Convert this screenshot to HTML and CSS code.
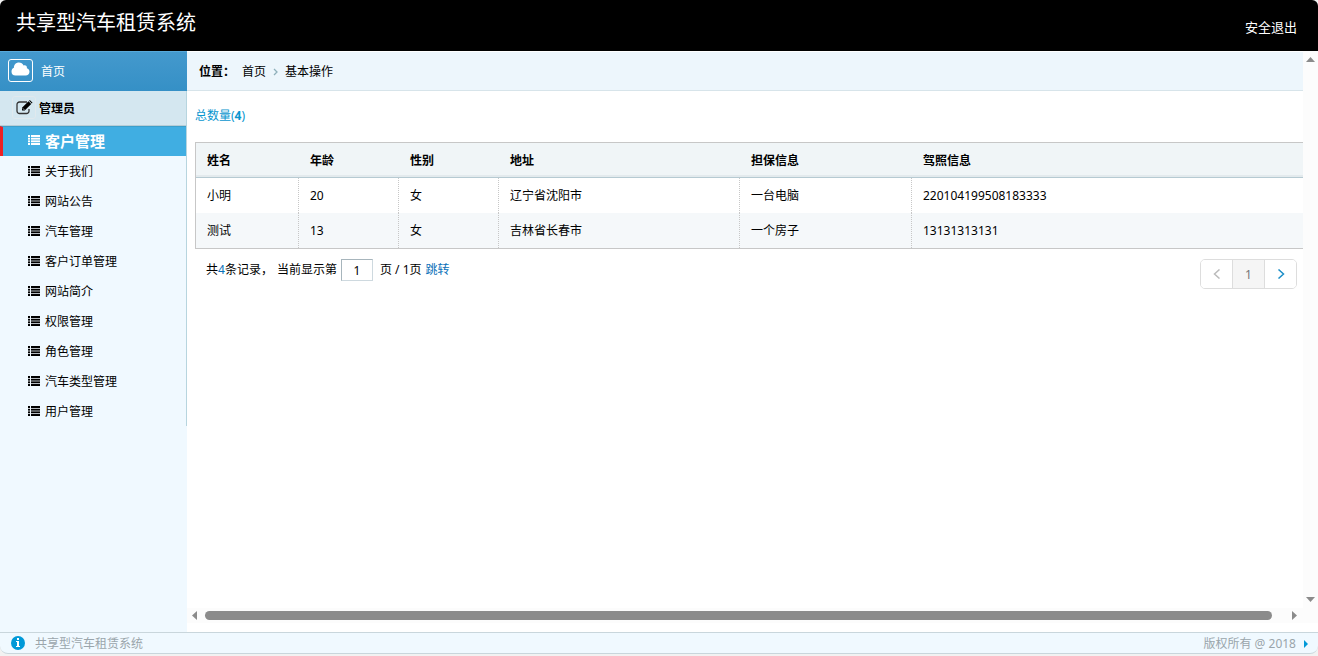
FILE: index.html
```html
<!DOCTYPE html>
<html lang="zh-CN">
<head>
  <meta charset="UTF-8">
  <meta name="viewport" content="width=device-width, initial-scale=1.0">
  <title>共享型汽车租赁系统</title>
  <link rel="stylesheet" href="styles.css">
</head>
<body>
  <svg class="defs" aria-hidden="true">
    <symbol id="icon-list" viewBox="0 0 12 10">
      <path d="M0 0h2v10H0zM3 0h9v10H3z" opacity=".25"/>
      <path d="M0 0h2v2H0zM3 0h9v2H3zM0 3h2v1.500H0zM3 3h9v1.500H3zM0 5.500h2v1.500H0zM3 5.500h9v1.500H3zM0 8h2v2H0zM3 8h9v2H3z"/>
    </symbol>
  </svg>

  <header class="header">
    <h1>共享型汽车租赁系统</h1>
    <a href="#" class="logout">安全退出</a>
  </header>

  <div class="wrapper">
    <nav class="sidebar">
      <div class="menu">
        <a href="#" class="menu-home">
          <span class="home-icon">
            <svg width="19" height="14" viewBox="0 0 19 14"><path d="M4.500 13.500A4 4 0 0 1 .5 9.500C.5 7.600 1.600 6.400 2.900 5.800C2.800 2.700 5 .5 7.900 .5C10 .5 11.800 1.700 12.600 3.500C14.500 2.700 16.300 4.200 15.900 6.200C17.400 6.600 18.500 8 18.500 9.700C18.500 11.800 16.800 13.500 14.700 13.500z"/></svg>
          </span>
          <span>首页</span>
        </a>
        <a href="#" class="menu-group">
          <span class="group-icon">
            <svg width="17" height="15" viewBox="0 0 17 15">
              <path d="M11 2H3.500A2.500 2.500 0 0 0 1 4.500V11A2.500 2.500 0 0 0 3.500 13.500H10.500A2.500 2.500 0 0 0 13 11V9" fill="none" stroke="#333" stroke-width="1.300"/>
              <path d="M6 10.500V7.800L12.500 1.300L15.200 4L8.700 10.500zM13.100 .7L13.800 0L16.500 2.700L15.800 3.400z"/>
              <path d="M7 8.500L8.200 9.700" stroke="#d4e7f0" stroke-width="1"/>
            </svg>
          </span>
          <span>管理员</span>
        </a>
        <ul>
          <li class="active"><a href="#"><svg class="list-icon"><use href="#icon-list"/></svg>客户管理</a></li>
          <li><a href="#"><svg class="list-icon"><use href="#icon-list"/></svg>关于我们</a></li>
          <li><a href="#"><svg class="list-icon"><use href="#icon-list"/></svg>网站公告</a></li>
          <li><a href="#"><svg class="list-icon"><use href="#icon-list"/></svg>汽车管理</a></li>
          <li><a href="#"><svg class="list-icon"><use href="#icon-list"/></svg>客户订单管理</a></li>
          <li><a href="#"><svg class="list-icon"><use href="#icon-list"/></svg>网站简介</a></li>
          <li><a href="#"><svg class="list-icon"><use href="#icon-list"/></svg>权限管理</a></li>
          <li><a href="#"><svg class="list-icon"><use href="#icon-list"/></svg>角色管理</a></li>
          <li><a href="#"><svg class="list-icon"><use href="#icon-list"/></svg>汽车类型管理</a></li>
          <li><a href="#"><svg class="list-icon"><use href="#icon-list"/></svg>用户管理</a></li>
        </ul>
      </div>
    </nav>

    <div class="main">
      <div class="view">
        <main class="content">
          <div class="place">
            <b>位置：</b>
            <a href="#">首页</a>
            <svg width="5" height="8" viewBox="0 0 5 8"><path d="M1 1L4 4L1 7" fill="none" stroke="#8fb0bb" stroke-width="1.300"/></svg>
            <a href="#">基本操作</a>
          </div>
          <div class="page">
            <a href="#" class="total">总数量(<b>4</b>)</a>
            <table class="tablelist">
              <colgroup>
                <col class="col-first">
                <col class="col-short">
                <col class="col-short">
                <col class="col-address">
                <col class="col-guarantee">
                <col>
              </colgroup>
              <thead>
                <tr><th>姓名</th><th>年龄</th><th>性别</th><th>地址</th><th>担保信息</th><th>驾照信息</th></tr>
              </thead>
              <tbody>
                <tr><td>小明</td><td>20</td><td>女</td><td>辽宁省沈阳市</td><td>一台电脑</td><td>220104199508183333</td></tr>
                <tr><td>测试</td><td>13</td><td>女</td><td>吉林省长春市</td><td>一个房子</td><td>13131313131</td></tr>
              </tbody>
            </table>
            <div class="pagin">
              <div class="message">
                <span>共<i>4</i>条记录，</span>
                <label for="page-no">当前显示第</label>
                <input type="text" id="page-no" value="1">
                <span>页 / 1页</span>
                <a href="#">跳转</a>
              </div>
              <div class="pager">
                <button type="button" class="prev" aria-label="上一页"><svg width="8" height="10" viewBox="0 0 8 10"><path d="M6.500 .5L1.500 5L6.500 9.500"/></svg></button>
                <button type="button" class="current">1</button>
                <button type="button" class="next" aria-label="下一页"><svg width="8" height="10" viewBox="0 0 8 10"><path d="M1.500 .5L6.500 5L1.500 9.500"/></svg></button>
              </div>
            </div>
          </div>
        </main>
        <div class="scroll-y">
          <svg width="9" height="5" viewBox="0 0 9 5"><path d="M0 5L4.500 0L9 5z"/></svg>
          <svg width="9" height="5" viewBox="0 0 9 5"><path d="M0 0L4.500 5L9 0z"/></svg>
        </div>
      </div>
      <div class="scroll-x">
        <svg width="5" height="9" viewBox="0 0 5 9"><path d="M5 0L0 4.500L5 9z"/></svg>
        <div class="thumb"></div>
        <svg width="5" height="9" viewBox="0 0 5 9"><path d="M0 0L5 4.500L0 9z"/></svg>
      </div>
    </div>
  </div>

  <footer class="footer">
    <svg class="info-icon" width="14" height="14" viewBox="0 0 14 14"><circle cx="7" cy="7" r="7" fill="#0099d8"/><path d="M6 2h2v2H6zM5 5h3v5h1v1H5v-1h1V6H5z" fill="#fff"/></svg>
    <span class="name">共享型汽车租赁系统</span>
    <span class="copyright">版权所有 @ 2018</span>
    <svg width="4" height="8" viewBox="0 0 4 8"><path d="M0 0L4 4L0 8z" fill="#0099d8"/></svg>
  </footer>
</body>
</html>
```

FILE: styles.css
```css
* {
  box-sizing: border-box;
  margin: 0;
  padding: 0;
}
body {
  display: flex;
  flex-direction: column;
  height: 100vh;
  padding-bottom: 2px;
  background: #f2f2f2;
  color: #000;
  font: 12px/20px "Noto Sans", "Noto Sans CJK SC", sans-serif;
  overflow: hidden;
}
a {
  color: inherit;
  text-decoration: none;
}
ul {
  list-style: none;
}
i {
  font-style: normal;
}
svg {
  flex: none;
}
.defs {
  display: none;
}

/* header */
.header {
  display: flex;
  justify-content: space-between;
  align-items: flex-start;
  flex: none;
  height: 51px;
  padding: 9px 21px 0 16px;
  background: #000;
  border-radius: 6px 6px 0 0;
  color: #fff;
}
.header h1 {
  font-size: 20px;
  line-height: 28px;
  font-weight: 400;
}
.logout {
  padding-top: 8px;
  font-size: 13px;
}

.wrapper {
  display: flex;
  flex: 1;
  min-height: 0;
  background: #fff;
}

/* left menu */
.sidebar {
  flex: none;
  width: 187px;
  background: #f0f9ff;
}
.menu-home {
  display: flex;
  align-items: center;
  gap: 8px;
  height: 40px;
  padding: 0 8px;
  border-top: 1px solid #57a9da;
  background: linear-gradient(#4499cd, #3590c6);
  color: #fff;
}
.home-icon,
.group-icon {
  display: flex;
  align-items: center;
  justify-content: center;
  height: 23px;
  margin-bottom: 3px;
  border-radius: 3px;
}
.home-icon {
  width: 25px;
  padding-bottom: 2px;
  border: 1px solid #fff;
  fill: #fff;
}
.menu-group {
  display: flex;
  align-items: center;
  gap: 3px;
  height: 35px;
  padding: 2px 0 0 12px;
  border-right: 1px solid #b7d5df;
  border-bottom: 1px solid #b7cdd6;
  background: #d4e7f0;
  font-weight: 700;
}
.group-icon {
  width: 24px;
  border: 1px solid #e0e9ee;
}
.menu ul {
  border-right: 1px solid #b7d5df;
}
.menu li a {
  display: flex;
  align-items: center;
  gap: 5px;
  height: 30px;
  padding: 2px 0 0 28px;
}
.menu .active a {
  padding: 0 0 1px 25px;
  border-left: 3px solid #ed2024;
  border-top: 1px solid #3b9fcb;
  background: #40aee2;
  color: #fff;
  font-size: 15px;
  font-weight: 700;
}
.list-icon {
  width: 12px;
  height: 10px;
  margin-bottom: 2px;
  fill: currentColor;
}

/* content */
.main {
  display: flex;
  flex-direction: column;
  flex: 1;
  min-width: 0;
  padding-bottom: 9px;
}
.view {
  display: flex;
  flex: 1;
  min-height: 0;
}
.content {
  flex: 1;
  min-width: 0;
}
.place {
  display: flex;
  align-items: center;
  gap: 7px;
  height: 40px;
  padding: 2px 0 0 12px;
  border-top: 1px solid #fff;
  border-bottom: 1px solid #d7e4ea;
  background: #edf6fc;
}
.page {
  padding: 15px 0 0 8px;
}
.total {
  display: block;
  color: #0a96cf;
}
.tablelist {
  width: 100%;
  margin-top: 16px;
  border: 1px solid #c7c7c7;
  border-right: 0;
  border-spacing: 0;
  table-layout: fixed;
}
.col-first {
  width: 103px;
}
.col-short {
  width: 100px;
}
.col-address {
  width: 241px;
}
.col-guarantee {
  width: 172px;
}
.tablelist th,
.tablelist td {
  height: 35px;
  padding-left: 11px;
  text-align: left;
}
.tablelist th {
  padding-top: 2px;
  border-bottom: 1px solid #b6cad2;
  background: #f0f5f7;
  box-shadow: inset 0 -2px #e3eaed;
}
.tablelist td {
  border-right: 1px dotted #c7c7c7;
}
.tablelist td:last-child {
  border-right: 0;
}
.tablelist tbody tr:nth-child(even) {
  background: #f5f8fa;
}
.pagin {
  display: flex;
  justify-content: space-between;
  align-items: flex-start;
  padding: 10px 6px 0 11px;
}
.message {
  display: flex;
  align-items: center;
  gap: 4px;
}
.message i,
.message a {
  color: #0a70b8;
}
.message input {
  width: 32px;
  height: 22px;
  margin-right: 3px;
  border: 1px solid #ced9df;
  border-top-color: #a7b5bc;
  border-left-color: #a7b5bc;
  background: #fff;
  font: inherit;
  text-align: center;
}
.pager {
  display: flex;
  border: 1px solid #ddd;
  border-radius: 5px;
  overflow: hidden;
}
.pager button {
  display: flex;
  align-items: center;
  justify-content: center;
  width: 32px;
  height: 28px;
  border: 0;
  border-right: 1px solid #ddd;
  background: #fff;
  font: inherit;
}
.pager button:last-child {
  width: 31px;
  border-right: 0;
}
.pager .current {
  padding-top: 2px;
  background: #f5f5f5;
  color: #777;
}
.pager svg {
  fill: none;
  stroke: #bbb;
  stroke-width: 1.5;
}
.pager .next svg {
  stroke: #1e8fc8;
}

/* scroll bars */
.scroll-y {
  display: flex;
  flex-direction: column;
  justify-content: space-between;
  align-items: center;
  flex: none;
  width: 15px;
  padding: 6px 0;
  background: #fcfcfc;
  fill: #8b8b8b;
}
.scroll-x {
  display: flex;
  align-items: center;
  gap: 8px;
  height: 15px;
  padding: 0 21px 0 5px;
  background: #fcfcfc;
  fill: #8b8b8b;
}
.thumb {
  flex: 1;
  height: 9px;
  margin-right: 12px;
  border-radius: 5px;
  background: #8b8b8b;
}

/* footer */
.footer {
  display: flex;
  align-items: center;
  gap: 8px;
  flex: none;
  height: 22px;
  padding: 2px 10px 0 11px;
  border: solid #c9d6dc;
  border-width: 1px 0;
  border-radius: 0 0 8px 8px;
  background: #f0f9ff;
  color: #9aa5ab;
}
.info-icon {
  margin-bottom: 2px;
}
.footer .name {
  margin-left: 2px;
}
.copyright {
  margin-left: auto;
}
```
